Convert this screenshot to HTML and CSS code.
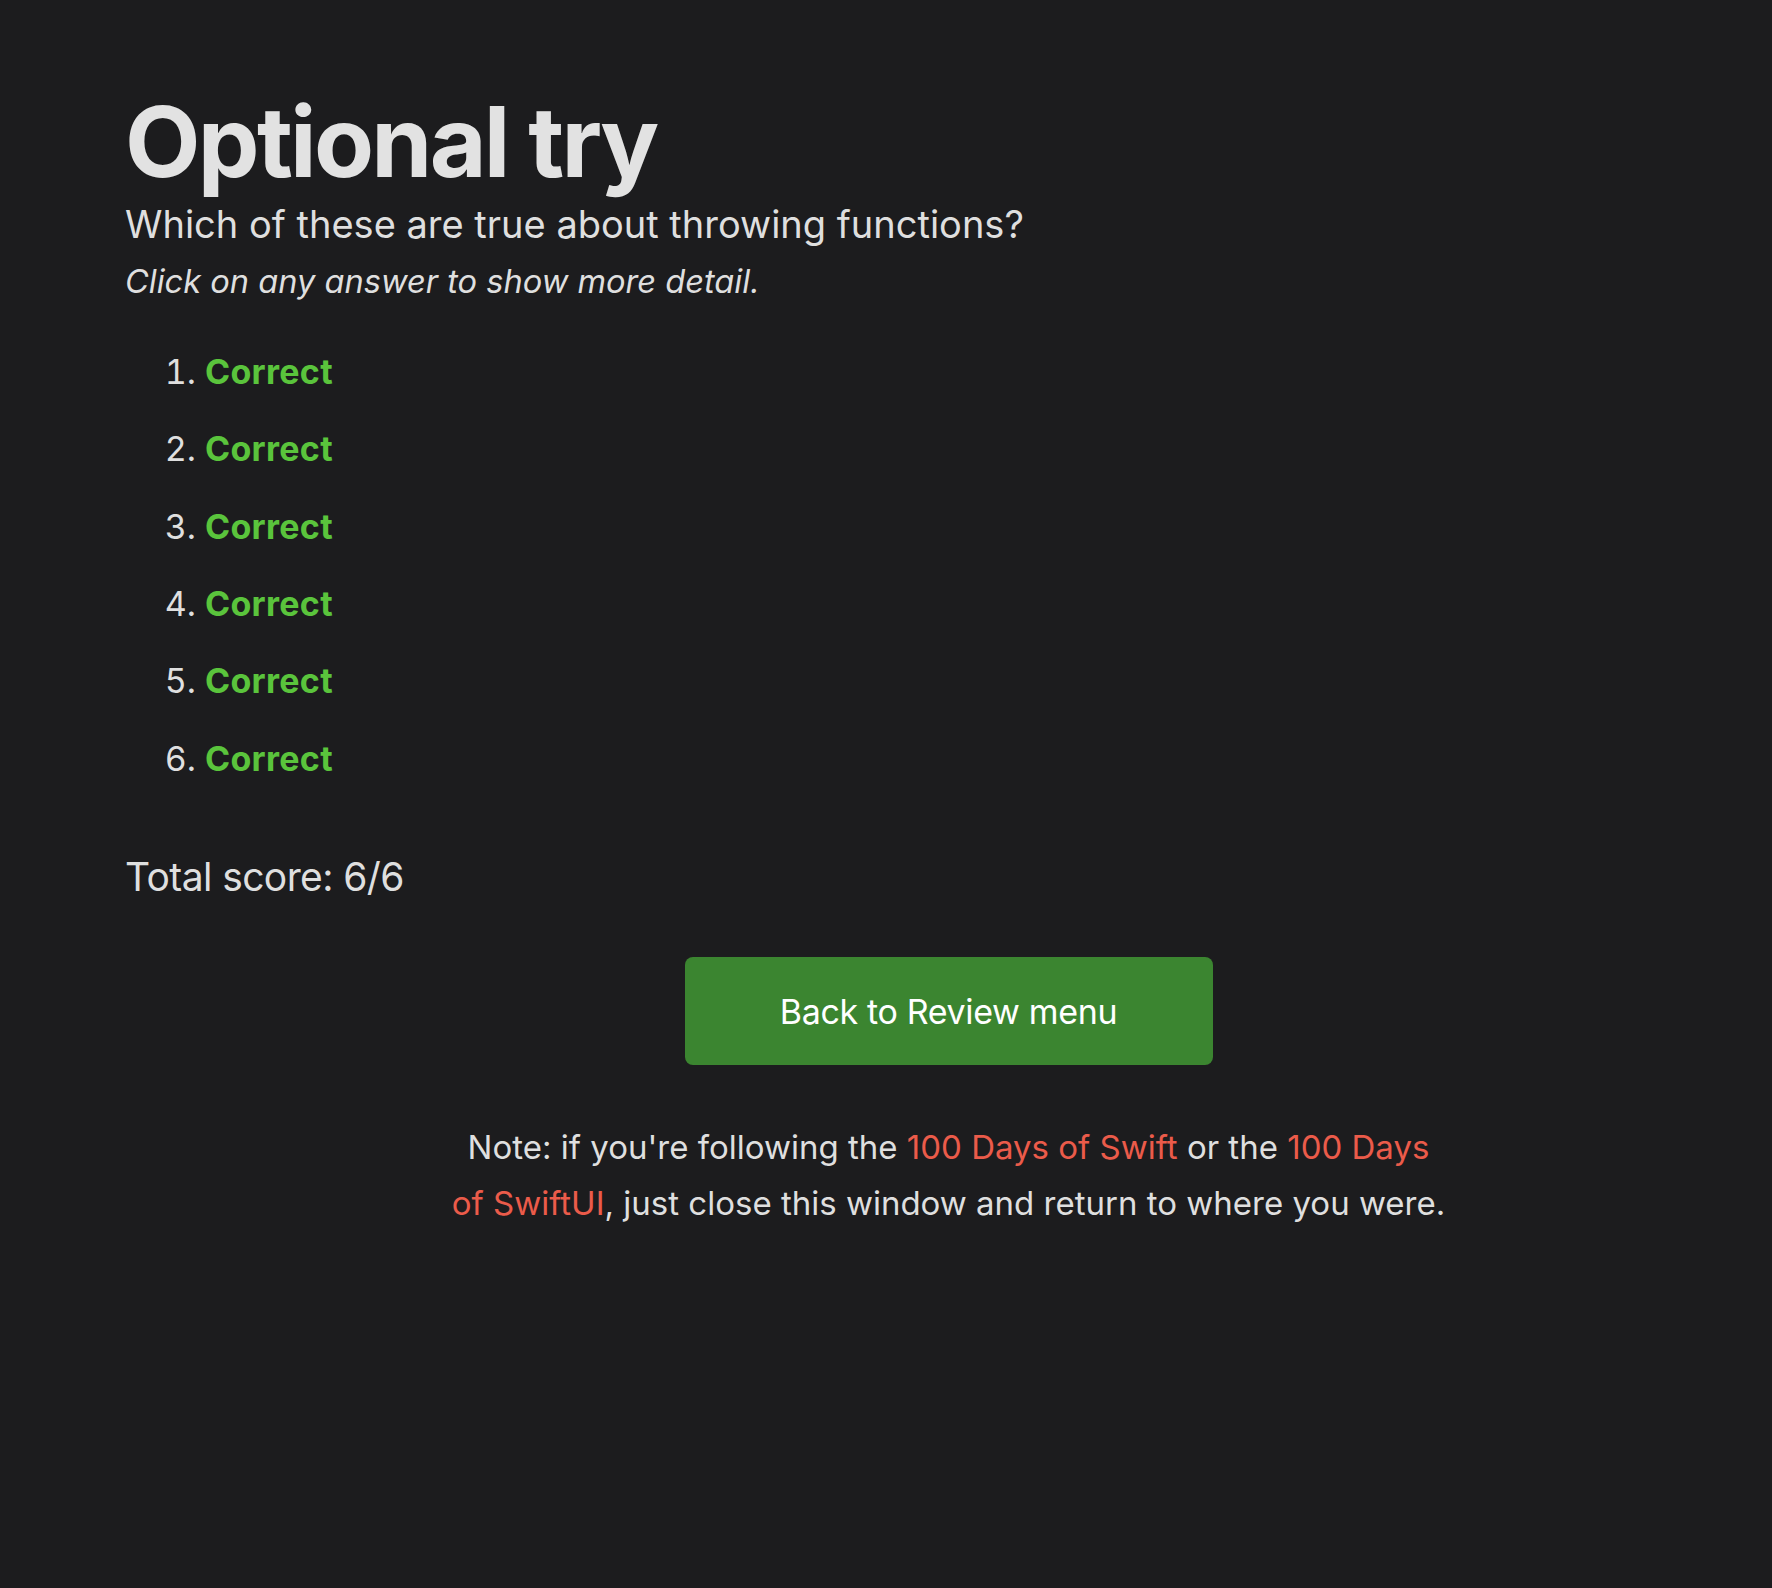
FILE: index.html
```html
<!DOCTYPE html>
<html lang="en">
<head>
<meta charset="utf-8">
<title>Optional try</title>
<link rel="stylesheet" href="styles.css">
</head>
<body>
<main class="page">
  <h1 class="title">Optional try</h1>
  <p class="question">Which of these are true about throwing functions?</p>
  <p class="hint">Click on any answer to show more detail.</p>
  <ol class="answers">
    <li><span class="correct">Correct</span></li>
    <li><span class="correct">Correct</span></li>
    <li><span class="correct">Correct</span></li>
    <li><span class="correct">Correct</span></li>
    <li><span class="correct">Correct</span></li>
    <li><span class="correct">Correct</span></li>
  </ol>
  <p class="score">Total score: 6/6</p>
  <div class="actions">
    <a class="button" href="#">Back to Review menu</a>
  </div>
  <p class="note">Note: if you're following the <a href="#">100 Days of Swift</a> or the <a href="#">100 Days of SwiftUI</a>, just close this window and return to where you were.</p>
</main>
</body>
</html>
```
FILE: styles.css
```css
html, body {
  margin: 0;
  padding: 0;
  background: #1c1c1e;
}

body {
  color: #dfdfdf;
  font-family: Inter, "Noto Sans", "Liberation Sans", sans-serif;
  font-size: 34px;
}

.page {
  padding: 0 0 120px 125px;
}

.title {
  margin: 83px 0 0 0;
  font-size: 98px;
  line-height: 1.2;
  font-weight: 700;
  letter-spacing: -2.7px;
  color: #e2e2e2;
}

.question {
  margin: 1px 0 0 0;
  font-size: 38px;
  line-height: 1.2;
}

.hint {
  margin: 13px 0 0 0;
  font-size: 32.6px;
  line-height: 1.3;
  font-style: italic;
}

.answers {
  margin: 47px 0 0 0;
  padding-left: 80px;
  display: flex;
  flex-direction: column;
  gap: 33.3px;
}

.answers li {
  font-size: 34px;
  line-height: 1.3;
}

.correct {
  color: #5ac43c;
  font-weight: 700;
  letter-spacing: 0.3px;
}

.score {
  margin: 70px 0 0 0;
  font-size: 39px;
  line-height: 52px;
  letter-spacing: -0.6px;
}

.actions {
  display: flex;
  justify-content: center;
  margin-top: 54px;
}

.button {
  display: flex;
  align-items: center;
  justify-content: center;
  width: 528px;
  height: 108px;
  border-radius: 8px;
  background: #3b8530;
  color: #ffffff;
  text-decoration: none;
  font-size: 34px;
  letter-spacing: -0.35px;
}

.note {
  margin: 54px auto 0 auto;
  max-width: 996px;
  text-align: center;
  font-size: 33px;
  line-height: 56px;
}

.note a {
  color: #eb5b4a;
  text-decoration: none;
}
```
